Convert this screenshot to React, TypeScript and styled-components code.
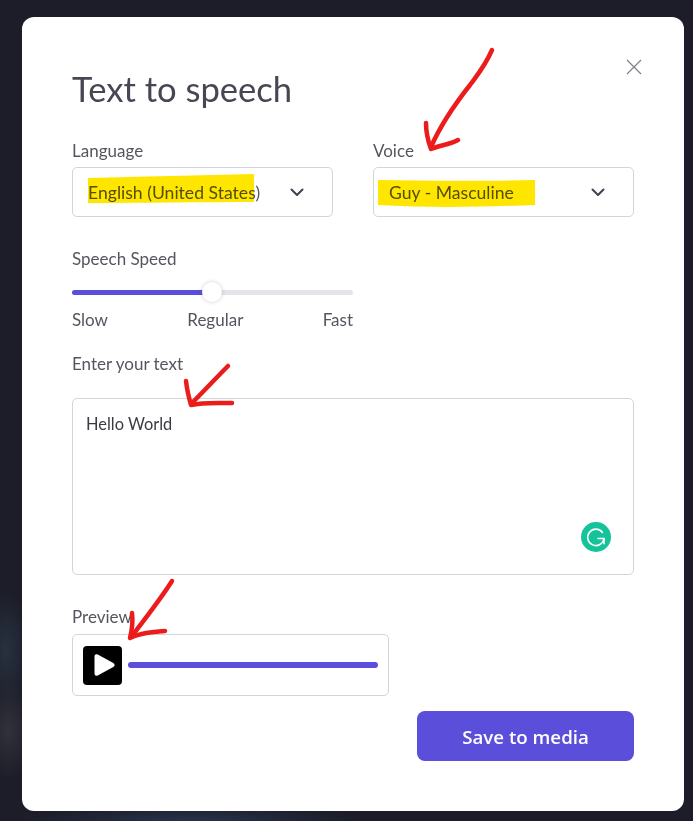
import { FC } from 'react';
import styled, { createGlobalStyle } from 'styled-components';

const GlobalStyle = createGlobalStyle`
    html, body {
        margin: 0;
        padding: 0;
        height: 100%;
    }
    body {
        width: 693px;
        height: 821px;
        overflow: hidden;
        font-family: "Lato", "Open Sans", sans-serif;
        background:
            radial-gradient(ellipse 24px 60px at 6px 650px, #27313f 0%, rgba(39, 49, 63, 0) 100%),
            radial-gradient(ellipse 24px 50px at 8px 730px, #32323c 0%, rgba(50, 50, 60, 0) 100%),
            radial-gradient(ellipse 170px 16px at 190px 821px, #26334d 0%, rgba(38, 51, 77, 0) 100%),
            #1c1d28;
    }
`

const SPage = styled.div`
    position: relative;
    width: 693px;
    height: 821px;
    padding: 17px 9px 10px 22px;
    box-sizing: border-box;
`
const SModal = styled.div`
    position: relative;
    height: 794px;
    box-sizing: border-box;
    padding: 48px 50px 0;
    background: #fff;
    border-radius: 12px;
    color: #41414f;
`
const STitle = styled.h1`
    margin: 0 0 27px;
    font-size: 34.6px;
    line-height: 48px;
    font-weight: 400;
    color: #474754;
`
const SClose = styled.button`
    position: absolute;
    top: 41px;
    right: 41px;
    width: 18px;
    height: 18px;
    padding: 0;
    border: 0;
    background: none;
    color: #7f7f8c;
`
const SRow = styled.div`
    display: grid;
    grid-template-columns: 261px 261px;
    gap: 40px;
`
const SLabel = styled.div<{ $mb?: number }>`
    font-size: 17px;
    line-height: 22px;
    margin-bottom: ${(p) => p.$mb ?? 5}px;
    color: #55555f;
`
const SSelect = styled.div`
    display: flex;
    align-items: center;
    justify-content: space-between;
    height: 50px;
    box-sizing: border-box;
    padding: 0 28px 0 15px;
    border: 1px solid #d4d4dd;
    border-radius: 5px;
    font-size: 17.6px;
    color: #55555f;
`
const SSpeed = styled.div`
    width: 281px;
    margin-top: 31px;
`
const STrack = styled.div`
    position: relative;
    height: 5px;
    margin-top: 20px;
    border-radius: 3px;
    background: #e4e4ea;
`
const SFill = styled.div`
    height: 100%;
    border-radius: 3px;
    background: #5a4edb;
`
const SThumb = styled.div`
    position: absolute;
    top: -8px;
    left: 130px;
    width: 20px;
    height: 20px;
    border-radius: 50%;
    background: #fff;
    box-shadow: 0 0 4px rgba(60, 60, 80, 0.25);
`
const STicks = styled.div`
    display: flex;
    justify-content: space-between;
    margin-top: 14px;
    font-size: 17px;
    line-height: 22px;
    color: #55555f;
`
const STextLabel = styled(SLabel)`
    margin-top: 22px;
`
const STextBox = styled.div`
    position: relative;
    height: 177px;
    box-sizing: border-box;
    padding: 14px 13px;
    border: 1px solid #d4d4dd;
    border-radius: 5px;
    font-size: 16.4px;
    line-height: 22px;
    color: #3a3a42;
`
const SGrammarly = styled.div`
    position: absolute;
    right: 22px;
    bottom: 22px;
    width: 30px;
    height: 30px;
`
const SPreviewLabel = styled(SLabel)`
    margin-top: 31px;
`
const SPreview = styled.div`
    display: flex;
    align-items: center;
    gap: 6px;
    width: 317px;
    height: 62px;
    box-sizing: border-box;
    padding: 0 10px;
    border: 1px solid #d4d4dd;
    border-radius: 5px;
`
const SPlay = styled.div`
    display: flex;
    align-items: center;
    justify-content: center;
    width: 39px;
    height: 39px;
    border-radius: 4px;
    background: #000;
`
const SBar = styled.div`
    flex: 1;
    height: 6px;
    border-radius: 3px;
    background: #5a4edb;
`
const SFooter = styled.div`
    display: flex;
    justify-content: flex-end;
    margin-top: 15px;
`
const SSave = styled.button`
    width: 217px;
    height: 50px;
    border: 0;
    border-radius: 8px;
    background: #5a4edb;
    color: #fff;
    font-family: "Open Sans", sans-serif;
    font-size: 18.7px;
    font-weight: 600;
`
// the marker scribbles someone drew on top of the screenshot
const SHighlights = styled.svg`
    position: absolute;
    top: 0;
    left: 0;
    mix-blend-mode: multiply;
    pointer-events: none;
`
const SArrows = styled.svg`
    position: absolute;
    top: 0;
    left: 0;
    pointer-events: none;
`

const Chevron: FC = () => (
    <svg width="14" height="9" viewBox="0 0 14 9" fill="none">
        <path d="M1.5 1.5 7 7l5.5-5.5" stroke="#41414f" strokeWidth="2" strokeLinecap="round" strokeLinejoin="round" />
    </svg>
)

export default function App() {
    return (
        <SPage>
            <GlobalStyle />
            <SModal>
                <SClose>
                    <svg width="18" height="18" viewBox="0 0 18 18" fill="none">
                        <path d="M2 2l14 14M16 2 2 16" stroke="currentColor" strokeWidth="1.2" />
                    </svg>
                </SClose>
                <STitle>Text to speech</STitle>
                <SRow>
                    <div>
                        <SLabel>Language</SLabel>
                        <SSelect>
                            <span>English (United States)</span>
                            <Chevron />
                        </SSelect>
                    </div>
                    <div>
                        <SLabel>Voice</SLabel>
                        <SSelect>
                            <span>Guy - Masculine</span>
                            <Chevron />
                        </SSelect>
                    </div>
                </SRow>
                <SSpeed>
                    <SLabel $mb={0}>Speech Speed</SLabel>
                    <STrack>
                        <SFill style={{ width: '50%' }} />
                        <SThumb />
                    </STrack>
                    <STicks>
                        <span>Slow</span>
                        <span>Regular</span>
                        <span>Fast</span>
                    </STicks>
                </SSpeed>
                <STextLabel $mb={23}>Enter your text</STextLabel>
                <STextBox>
                    Hello World
                    <SGrammarly>
                        <svg width="30" height="30" viewBox="0 0 30 30" fill="none">
                            <circle cx="15" cy="15" r="15" fill="#15c39a" />
                            <path d="M21.5 10.5A8.2 8.2 0 1 0 23 16.5" stroke="#fff" strokeWidth="1.6" strokeLinecap="round" />
                            <path d="M17 16.5h6v5.2" stroke="#fff" strokeWidth="1.6" strokeLinecap="round" strokeLinejoin="round" />
                        </svg>
                    </SGrammarly>
                </STextBox>
                <SPreviewLabel $mb={6}>Preview</SPreviewLabel>
                <SPreview>
                    <SPlay>
                        <svg width="26" height="26" viewBox="0 0 26 26">
                            <path d="M4.5 4.5v17c0 2 1.6 2.8 3.2 1.9l15.6-8.5c1.8-1 1.8-2.8 0-3.8L7.7 2.6C6.1 1.7 4.5 2.5 4.5 4.5z" fill="#fff" />
                        </svg>
                    </SPlay>
                    <SBar />
                </SPreview>
                <SFooter>
                    <SSave>Save to media</SSave>
                </SFooter>
            </SModal>
            <SHighlights width="693" height="821" viewBox="0 0 693 821">
                <path d="M88 178 C140 177 200 175 254 174 L254 202 C200 202 140 203 88 203 Z" fill="#ffe600" />
                <path d="M378 180 C430 181 490 181 535 180 L535 205 C480 207 430 208 378 205 Z" fill="#ffe600" />
            </SHighlights>
            <SArrows width="693" height="821" viewBox="0 0 693 821" fill="none" stroke="#ec1c1c" strokeWidth="4.5" strokeLinecap="round" strokeLinejoin="round">
                <path d="M492 50 C485 66 478 74 470 85 C455 104 441 124 431 147" />
                <path d="M426 123 C426 132 428 141 431 149 C438 146 451 144 458 140" />
                <path d="M228 366 C216 378 205 390 192 403" />
                <path d="M186 381 C187 390 189 398 191 405 C203 402 218 403 232 403" />
                <path d="M172 581 C162 597 148 615 132 636" />
                <path d="M132 613 C133 621 132 630 130 638 C140 633 152 632 165 631" />
            </SArrows>
        </SPage>
    )
}
